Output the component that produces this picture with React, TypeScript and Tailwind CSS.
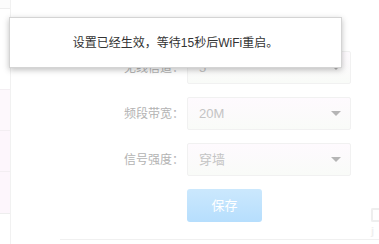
const fields = [
  { label: '无线信道：', value: '5' },
  { label: '频段带宽：', value: '20M' },
  { label: '信号强度：', value: '穿墙' },
]

function Select({ value }: { value: string }) {
  return (
    <div className="flex h-[33px] w-[164px] items-center justify-between rounded-[2px] border border-[#f1f1f1] bg-gradient-to-b from-[#fefafe] to-[#f9fbf8] pl-[11px] pr-[9px]">
      <span className="text-[13px] text-[#c4c4c4]">{value}</span>
      <span className="h-0 w-0 border-x-[5px] border-t-[5px] border-x-transparent border-t-[#b5b5b5]" />
    </div>
  )
}

export default function App() {
  return (
    <div
      className="relative flex h-[244px] w-[379px] overflow-hidden bg-white"
      style={{ fontFamily: '"Liberation Sans", "Noto Sans CJK SC", sans-serif' }}
    >
      {/* left sidebar edge */}
      <div className="flex w-[11px] shrink-0 flex-col border-r border-[#f1f1f1] bg-[#fcfcfc]">
        <div className="h-[9px] border-b border-[#eeeeee]" />
        <div className="h-[81px] border-b border-[#f3eef2] bg-white" />
        <div className="h-[41px] border-b border-[#f3eef2] bg-[#fdf8fc]" />
        <div className="h-[41px] border-b border-[#f3eef2] bg-[#fdf6fc]" />
        <div className="h-[42px] border-b border-[#eeeeee] bg-[#fdf6fc]" />
        <div className="flex-1 bg-white" />
      </div>

      {/* form */}
      <div className="flex flex-1 flex-col pt-[51px]">
        <div className="flex flex-col gap-[13px]">
          {fields.map((f) => (
            <div key={f.label} className="flex items-center gap-[3px]">
              <div className="w-[173px] text-right text-[12px] text-[#b3b3b3]">{f.label}</div>
              <Select value={f.value} />
            </div>
          ))}
          <div className="flex pl-[176px]">
            <button className="flex h-[33px] w-[75px] items-center justify-center rounded-[3px] bg-gradient-to-b from-[#cbe8fd] to-[#b6defd] text-[13px] text-white">
              保存
            </button>
          </div>
        </div>
        <div className="ml-[49px] mt-[17px] border-t border-[#f0f0f0]" />
      </div>

      {/* watermark fragment */}
      <div className="absolute right-0 top-[208px] flex w-[8px] flex-col gap-[4px] opacity-60">
        <div className="h-[14px] rounded-l-[2px] border-y-2 border-l-2 border-[#e4e4e4]" />
        <div className="text-[11px] font-bold leading-none text-[#e6e6e6]">j</div>
      </div>

      {/* toast */}
      <div className="absolute left-[9px] top-[17px] flex h-[51px] w-[333px] items-center justify-center border border-[#d4d4d4] bg-white shadow-[0_2px_6px_rgba(0,0,0,0.25)]">
        <span className="text-[12px] text-[#333333]">设置已经生效，等待15秒后WiFi重启。</span>
      </div>
    </div>
  )
}
